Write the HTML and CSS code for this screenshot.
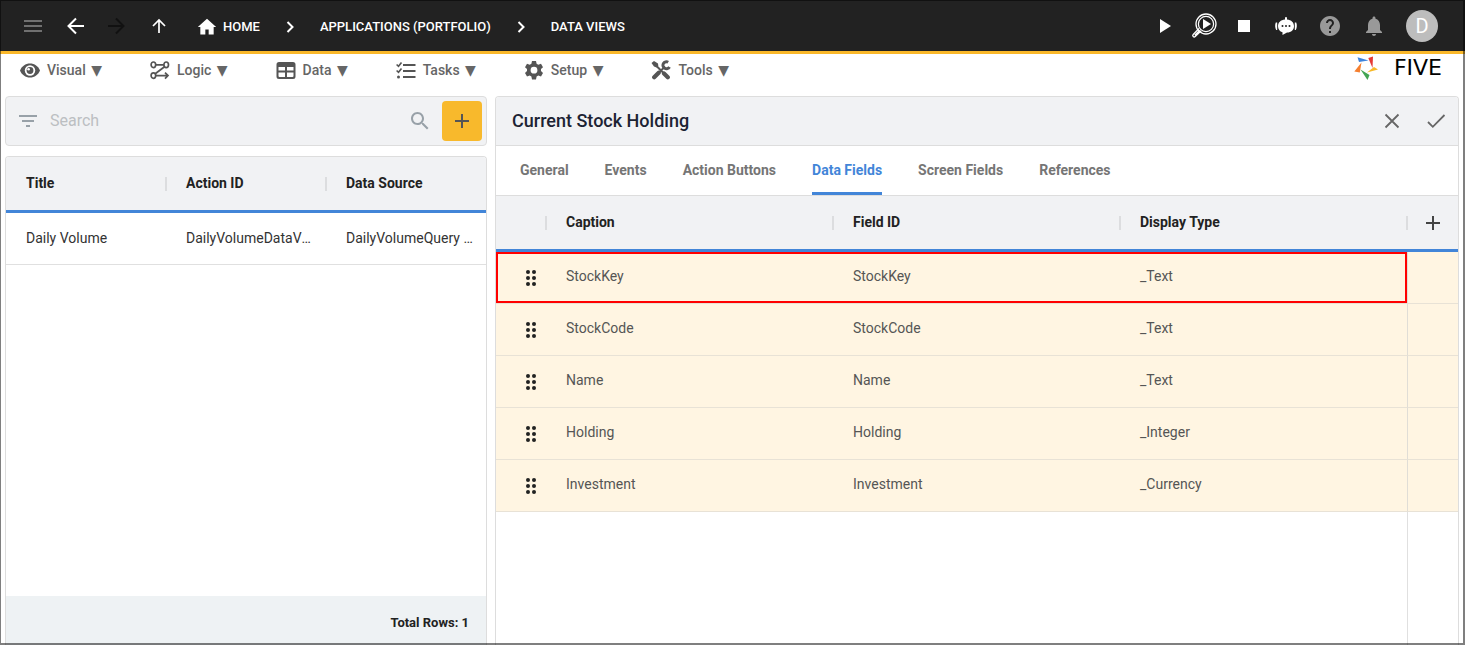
FILE: index.html
```html
<!DOCTYPE html>
<html lang="en">
<head>
<meta charset="utf-8">
<title>Five - Data Views</title>
<link rel="stylesheet" href="styles.css">
</head>
<body>
<div class="app">
  <header class="topbar">
    <nav class="topbar-nav" aria-label="Navigation">
      <button class="nav-btn dim" aria-label="Menu"><svg width="24" height="24" viewBox="0 0 24 24"><path fill="currentColor" d="M3 18h18v-2H3v2zm0-5h18v-2H3v2zm0-7v2h18V6H3z"/></svg></button>
      <button class="nav-btn" aria-label="Back"><svg width="24" height="24" viewBox="0 0 24 24"><path fill="none" stroke="currentColor" stroke-width="2" d="M21 12H6M13 4.500l-7.500 7.500 7.500 7.500"/></svg></button>
      <button class="nav-btn off" aria-label="Forward" disabled><svg width="24" height="24" viewBox="0 0 24 24"><path fill="none" stroke="currentColor" stroke-width="2" d="M3 12h15M11 4.500l7.500 7.500-7.500 7.500"/></svg></button>
      <button class="nav-btn" aria-label="Up"><svg width="24" height="24" viewBox="0 0 24 24"><path fill="none" stroke="currentColor" stroke-width="1.700" d="M12 19V6M6 12l6-6 6 6"/></svg></button>
    </nav>
    <nav class="crumbs" aria-label="Breadcrumb">
      <a href="#" class="crumb"><svg width="20" height="20" viewBox="0 0 24 24"><path fill="currentColor" d="M10 21v-6h4v6h6v-9h3L12 2 1 12h3v9z"/></svg>HOME</a>
      <svg class="sep" width="20" height="20" viewBox="0 0 20 20"><path fill="none" stroke="currentColor" stroke-width="2" d="M7.500 5l5 5-5 5"/></svg>
      <a href="#" class="crumb">APPLICATIONS (PORTFOLIO)</a>
      <svg class="sep" width="20" height="20" viewBox="0 0 20 20"><path fill="none" stroke="currentColor" stroke-width="2" d="M7.500 5l5 5-5 5"/></svg>
      <a href="#" class="crumb">DATA VIEWS</a>
    </nav>
    <div class="actions">
      <button class="act" aria-label="Run"><svg width="24" height="24" viewBox="0 0 24 24"><path fill="currentColor" d="M8 5v14l11-7z"/></svg></button>
      <button class="act" aria-label="Inspect"><svg width="26" height="26" viewBox="0 0 26 26"><g fill="none" stroke="currentColor"><circle cx="15" cy="11" r="10" stroke-width="1.300"/><circle cx="15" cy="11" r="7.600" stroke-width="1.200"/><path stroke-width="1.300" d="M8 15.500l-5.800 6a1.400 1.400 0 0 0 2 2l6-5.800M8.800 17.200l-5 5"/></g><path fill="currentColor" d="M12 6v10l8-5z"/></svg></button>
      <button class="act" aria-label="Stop"><svg width="24" height="24" viewBox="0 0 24 24"><path fill="currentColor" d="M6 6h12v12H6z"/></svg></button>
      <button class="act wide" aria-label="Assistant"><svg width="24" height="24" viewBox="0 0 24 24"><path fill="currentColor" d="M11 5.500V4a1 1 0 0 1 2 0v1.500c4.500 .3 7 3.200 7 6.700 0 3.600-2.800 6.300-7 6.300L8.500 21v-2.700c-2.800-.8-4.500-3.200-4.500-6.100 0-3.500 2.500-6.400 7-6.700zM1.800 8.500h1.400v7.500H2.200C1 14 .8 10.500 1.800 8.500zM20.800 8.500h1.400c1 2 .8 5.500-.4 7.500h-1z"/><g fill="#222"><circle cx="8.500" cy="12" r="1"/><circle cx="12" cy="12" r="1"/><circle cx="15.500" cy="12" r="1"/></g></svg></button>
      <button class="act wide grey" aria-label="Help"><svg width="24" height="24" viewBox="0 0 24 24"><path fill="currentColor" d="M12 2C6.480 2 2 6.480 2 12s4.480 10 10 10 10-4.480 10-10S17.520 2 12 2zm1 17h-2v-2h2v2zm2.070-7.750l-.9.920C13.450 12.900 13 13.500 13 15h-2v-.5c0-1.100.450-2.100 1.170-2.830l1.240-1.260c.370-.360.590-.860.590-1.410 0-1.100-.9-2-2-2s-2 .9-2 2H8c0-2.210 1.790-4 4-4s4 1.790 4 4c0 .880-.360 1.680-.930 2.250z"/></svg></button>
      <button class="act wide grey" aria-label="Notifications"><svg width="24" height="24" viewBox="0 0 24 24"><path fill="currentColor" d="M12 22c1.100 0 2-.9 2-2h-4c0 1.100.9 2 2 2zm6-6v-5c0-3.070-1.630-5.640-4.500-6.320V4c0-.830-.670-1.500-1.500-1.500s-1.500.670-1.500 1.500v.680C7.640 5.360 6 7.920 6 11v5l-2 2v1h16v-1z"/></svg></button>
      <button class="avatar" aria-label="Account">D</button>
    </div>
  </header>

  <div class="menubar">
    <nav class="menus" aria-label="Main">
      <button class="menu"><svg width="20" height="20" viewBox="0 0 20 20"><path fill="currentColor" d="M10 3.500C5.500 3.500 1.700 6.200 0 10.500c1.700 4.300 5.500 7 10 7s8.300-2.700 10-7c-1.700-4.300-5.500-7-10-7z"/><circle cx="10" cy="10.500" r="5.200" fill="#fff"/><circle cx="10" cy="10.500" r="3.400" fill="currentColor"/><circle cx="8.600" cy="9.200" r="1.300" fill="#fff"/></svg><span>Visual <i>▼</i></span></button>
      <button class="menu"><svg width="20" height="20" viewBox="0 0 20 20"><g fill="none" stroke="currentColor" stroke-width="1.700"><ellipse cx="3.400" cy="4.800" rx="2.300" ry="2.800"/><ellipse cx="16.200" cy="4.800" rx="2.300" ry="2.800"/><ellipse cx="3.400" cy="15.600" rx="2.300" ry="2.800"/><path d="M5.700 4.800h8.200M14.500 6.800l-9.300 7M5.700 15.600H18M15 12.600l3 3-3 3"/></g></svg><span>Logic <i>▼</i></span></button>
      <button class="menu"><svg width="20" height="20" viewBox="0 0 20 20"><path fill="currentColor" fill-rule="evenodd" d="M3 2h14a2.500 2.500 0 0 1 2.500 2.500v12A2.500 2.500 0 0 1 17 19H3a2.500 2.500 0 0 1-2.500-2.500v-12A2.500 2.500 0 0 1 3 2zM2.500 7v3.500H9V7zM11 7v3.500h6.500V7zM2.500 12.500V16a1 1 0 0 0 1 1H9v-4.500zM11 12.500V17h5.500a1 1 0 0 0 1-1v-3.500z"/></svg><span>Data <i>▼</i></span></button>
      <button class="menu"><svg width="20" height="20" viewBox="0 0 20 20"><g fill="none" stroke="currentColor" stroke-width="2"><path d="M7 5h12.500M7 11h12.500M7 17h12.500"/><path stroke-width="1.600" d="M.6 4.500l1.900 1.800L5.500 2.500M.6 10.500l1.900 1.800L5.500 8.500"/></g><circle cx="2.500" cy="17" r="1.500" fill="currentColor"/></svg><span>Tasks <i>▼</i></span></button>
      <button class="menu"><svg width="20" height="20" viewBox="0 0 20 20"><path fill="currentColor" fill-rule="evenodd" d="M8 1h4l.6 2.700 1.700 1 2.700-.9 2 3.400-2 1.900v2l2 1.900-2 3.500-2.700-.9-1.700 1L12 19.500H8l-.6-2.900-1.700-1-2.700.9-2-3.500 2-1.900v-2L1 7.200l2-3.400 2.700.9 1.700-1zM10 6.800a3.400 3.400 0 1 0 0 6.800 3.400 3.400 0 0 0 0-6.800z"/></svg><span>Setup <i>▼</i></span></button>
      <button class="menu"><svg width="20" height="20" viewBox="0 0 20 20"><g stroke="currentColor" fill="none"><path stroke-width="4.200" stroke-linecap="round" d="M3.200 17.300l4.500-4.500M13 13.500l3.800 3.800"/><path stroke-width="2" d="M4 4.500l9 9M8 12.500l6-6"/><path stroke-width="3" d="M17.200 2.200A3.500 3.500 0 1 0 18.500 7"/></g><path fill="currentColor" d="M.5 3L3 1l4 2.500.3 2.500L5.500 7.500 3 6.500z"/></svg><span>Tools <i>▼</i></span></button>
    </nav>
    <a href="#" class="brand" aria-label="Five">
      <svg width="24" height="24" viewBox="0 0 24 24"><path fill="#3f84dc" d="M3.500 1.200l11 3.300-9.500 1.400z"/><path fill="#e53935" d="M19 .5l-.5 11.500-4.200-10z"/><path fill="#f7b928" d="M24 13.500l-11 3 7-5.500z"/><path fill="#43a552" d="M6.500 13.500l9 5.500-2 5z"/><path fill="#f57f2f" d="M7.500 6.500L5.800 16.500l-5.500-1z"/></svg>
      <span>FIVE</span>
    </a>
  </div>

  <main class="workspace">
    <section class="side">
      <div class="search">
        <svg width="24" height="24" viewBox="0 0 24 24"><path fill="currentColor" d="M10 18h4v-2h-4v2zM3 6v2h18V6H3zm3 7h12v-2H6v2z"/></svg>
        <input type="text" placeholder="Search" aria-label="Search">
        <svg width="24" height="24" viewBox="0 0 24 24"><path fill="currentColor" d="M15.500 14h-.790l-.280-.270C15.410 12.590 16 11.110 16 9.500 16 5.910 13.090 3 9.500 3S3 5.910 3 9.500 5.910 16 9.500 16c1.610 0 3.090-.590 4.230-1.570l.270.280v.790l5 4.990L20.490 19l-4.990-5zm-6 0C7.010 14 5 11.990 5 9.500S7.010 5 9.500 5 14 7.010 14 9.500 11.990 14 9.500 14z"/></svg>
        <button class="add" aria-label="Add"><svg width="24" height="24" viewBox="0 0 24 24"><path fill="currentColor" d="M19 13h-6v6h-2v-6H5v-2h6V5h2v6h6v2z"/></svg></button>
      </div>
      <div class="list">
        <table class="grid views">
          <thead><tr><th>Title</th><th>Action ID</th><th>Data Source</th></tr></thead>
          <tbody><tr><td>Daily Volume</td><td>DailyVolumeDataView</td><td>DailyVolumeQuery (Query)</td></tr></tbody>
        </table>
        <footer class="total">Total Rows: 1</footer>
      </div>
    </section>

    <section class="detail">
      <div class="detail-head">
        <h1>Current Stock Holding</h1>
        <button class="tool" aria-label="Cancel"><svg width="24" height="24" viewBox="0 0 24 24"><path fill="none" stroke="currentColor" stroke-width="1.800" d="M5.500 5.500l13 13M18.500 5.500l-13 13"/></svg></button>
        <button class="tool" aria-label="Save"><svg width="24" height="24" viewBox="0 0 24 24"><path fill="none" stroke="currentColor" stroke-width="1.800" d="M4 13l4.800 4.800L20.500 6"/></svg></button>
      </div>
      <div class="tabs" role="tablist">
        <button role="tab">General</button>
        <button role="tab">Events</button>
        <button role="tab">Action Buttons</button>
        <button role="tab" aria-selected="true" class="current">Data Fields</button>
        <button role="tab">Screen Fields</button>
        <button role="tab">References</button>
      </div>
      <table class="grid fields">
        <thead><tr><th class="grip"></th><th>Caption</th><th>Field ID</th><th>Display Type</th><th class="end"><button class="tool small" aria-label="Add field"><svg width="24" height="24" viewBox="0 0 24 24"><path fill="currentColor" d="M19 13h-6v6h-2v-6H5v-2h6V5h2v6h6v2z"/></svg></button></th></tr></thead>
        <tbody>
          <tr class="marked"><td class="grip"><svg width="12" height="18" viewBox="0 0 12 18"><use href="#dots"/></svg></td><td>StockKey</td><td>StockKey</td><td>_Text</td><td class="end"></td></tr>
          <tr><td class="grip"><svg width="12" height="18" viewBox="0 0 12 18"><use href="#dots"/></svg></td><td>StockCode</td><td>StockCode</td><td>_Text</td><td class="end"></td></tr>
          <tr><td class="grip"><svg width="12" height="18" viewBox="0 0 12 18"><use href="#dots"/></svg></td><td>Name</td><td>Name</td><td>_Text</td><td class="end"></td></tr>
          <tr><td class="grip"><svg width="12" height="18" viewBox="0 0 12 18"><use href="#dots"/></svg></td><td>Holding</td><td>Holding</td><td>_Integer</td><td class="end"></td></tr>
          <tr><td class="grip"><svg width="12" height="18" viewBox="0 0 12 18"><use href="#dots"/></svg></td><td>Investment</td><td>Investment</td><td>_Currency</td><td class="end"></td></tr>
        </tbody>
      </table>
      <div class="rest"></div>
    </section>
  </main>
</div>
<svg class="defs" width="0" height="0"><defs><g id="dots" fill="#222"><circle cx="3" cy="3" r="2"/><circle cx="9" cy="3" r="2"/><circle cx="3" cy="9" r="2"/><circle cx="9" cy="9" r="2"/><circle cx="3" cy="15" r="2"/><circle cx="9" cy="15" r="2"/></g></defs></svg>
</body>
</html>
```
FILE: styles.css
```css
* { box-sizing: border-box; }
body { margin: 0; font: 14px/20px Roboto, "Liberation Sans", sans-serif; color: #333; background: #fff; overflow: hidden; }
svg { display: block; flex: none; }
button { font: inherit; color: inherit; background: none; border: 0; padding: 0; display: flex; align-items: center; justify-content: center; cursor: pointer; }
a { color: inherit; text-decoration: none; }
.defs { position: absolute; }

.app { height: 100vh; display: flex; flex-direction: column; }
.app::after { content: ""; position: fixed; inset: 0; border: solid rgba(0, 0, 0, .5); border-width: 1px 2px 2px 1px; pointer-events: none; }

.topbar { flex: none; height: 54px; background: #222; color: #fff; border-bottom: 3px solid #fab82a; display: flex; align-items: center; padding: 0 17px 0 12px; }
.topbar-nav { display: flex; }
.nav-btn { width: 42px; height: 40px; }
.nav-btn.dim { color: #707070; }
.nav-btn.off { color: #111; }
.crumbs { display: flex; align-items: center; gap: 20px; margin-left: 17px; padding-top: 2px; font-size: 13px; font-weight: 500; }
.crumb { display: flex; align-items: center; gap: 6px; }
.actions { display: flex; align-items: center; margin-left: auto; }
.act { width: 40px; height: 40px; }
.act.wide { width: 44px; }
.grey { color: #999; }
.avatar { width: 32px; height: 32px; margin: 0 10px; border-radius: 50%; background: #bdbdbd; color: #fff; font-size: 20px; }

.menubar { flex: none; height: 42px; display: flex; align-items: flex-start; justify-content: space-between; padding: 0 23px 0 20px; }
.menus { display: flex; gap: 48px; padding-top: 6px; }
.menu { gap: 7px; color: #555; font-weight: 500; }
.menu span { color: #666; }
.menu i { margin-left: 2px; font: 14px/16px "DejaVu Sans", sans-serif; }
.brand { min-width: 88px; display: flex; align-items: center; justify-content: space-between; padding-top: 2px; color: #000; font: 22px/24px "DejaVu Sans", sans-serif; }

.workspace { flex: 1; min-height: 0; display: grid; grid-template-columns: 1fr 2fr; gap: 8px; padding: 0 6px 0 5px; }
.side { min-width: 0; display: flex; flex-direction: column; gap: 10px; }
.search { height: 50px; display: flex; align-items: center; padding: 0 4px 0 10px; border: 1px solid #ddd; border-radius: 4px; background: #f1f2f4; color: #98a1a8; }
.search input { flex: 1; min-width: 0; border: 0; background: none; outline: 0; padding: 0 10px; font: 16px/24px Roboto, sans-serif; color: #333; }
.search input::placeholder { color: #bcbfc2; opacity: 1; }
.add { width: 40px; height: 40px; margin-left: 10px; border-radius: 4px; background: #f8b92c; color: #555; }

.list { flex: 1; min-height: 0; display: flex; flex-direction: column; border: 1px solid #ddd; border-bottom: 0; border-radius: 4px 4px 0 0; overflow: hidden; }
.total { margin-top: auto; height: 49px; padding: 17px; background: #eef2f4; color: #222; font-size: 13px; font-weight: 700; text-align: right; }

.grid { width: 100%; table-layout: fixed; border-collapse: separate; border-spacing: 0; }
.grid th { position: relative; height: 56px; padding: 0 20px 2px; text-align: left; font-weight: 700; color: #222; background: #f1f2f4; border-bottom: 3px solid #4285d8; }
.grid th + th::before { content: ""; position: absolute; left: -1px; top: 20px; width: 2px; height: 14px; background: #dcdddf; }
.grid td { height: 52px; padding: 0 20px 2px; border-bottom: 1px solid #e0e0e0; white-space: nowrap; overflow: hidden; text-overflow: ellipsis; }
.views td { padding-right: 14px; }
.views td:last-child { padding-right: 10px; }

.detail { min-width: 0; display: flex; flex-direction: column; border: 1px solid #ddd; border-bottom: 0; border-radius: 4px 4px 0 0; overflow: hidden; }
.detail-head { flex: none; height: 49px; display: flex; align-items: center; gap: 4px; padding: 0 2px 0 16px; background: #f1f2f4; border-bottom: 1px solid #ddd; color: #666; }
.detail-head h1 { flex: 1; margin: 0; font-size: 18px; line-height: 24px; font-weight: 500; color: #1c2333; }
.tool { width: 40px; height: 40px; }
.tabs { flex: none; height: 50px; display: flex; gap: 36px; padding: 0 24px; border-bottom: 1px solid #ddd; color: #757575; font-weight: 700; }
.tabs button { border-bottom: 3px solid transparent; padding-top: 2px; }
.tabs .current { color: #4285d8; border-color: #4285d8; }

.fields .grip { width: 50px; padding: 0 0 0 29px; }
.fields .end { width: 51px; padding: 0; }
.fields th.end { color: #444; }
.fields .small { width: 52px; }
.fields td { color: #555; background: #fff5e2; border-color: #e8e2d6; padding-bottom: 4px; }
.fields td.grip { padding-bottom: 0; }
.fields td.end { border-left: 1px solid #e0ddd6; }
.marked td:not(.end) { box-shadow: inset 0 2px #f00, inset 0 -2px #f00; }
.marked td:first-child { box-shadow: inset 0 2px #f00, inset 0 -2px #f00, inset 2px 0 #f00; }
.marked td:nth-last-child(2) { box-shadow: inset 0 2px #f00, inset 0 -2px #f00, inset -2px 0 #f00; }
.rest { flex: 1; width: 51px; align-self: flex-end; border-left: 1px solid #e0e0e0; }
```
